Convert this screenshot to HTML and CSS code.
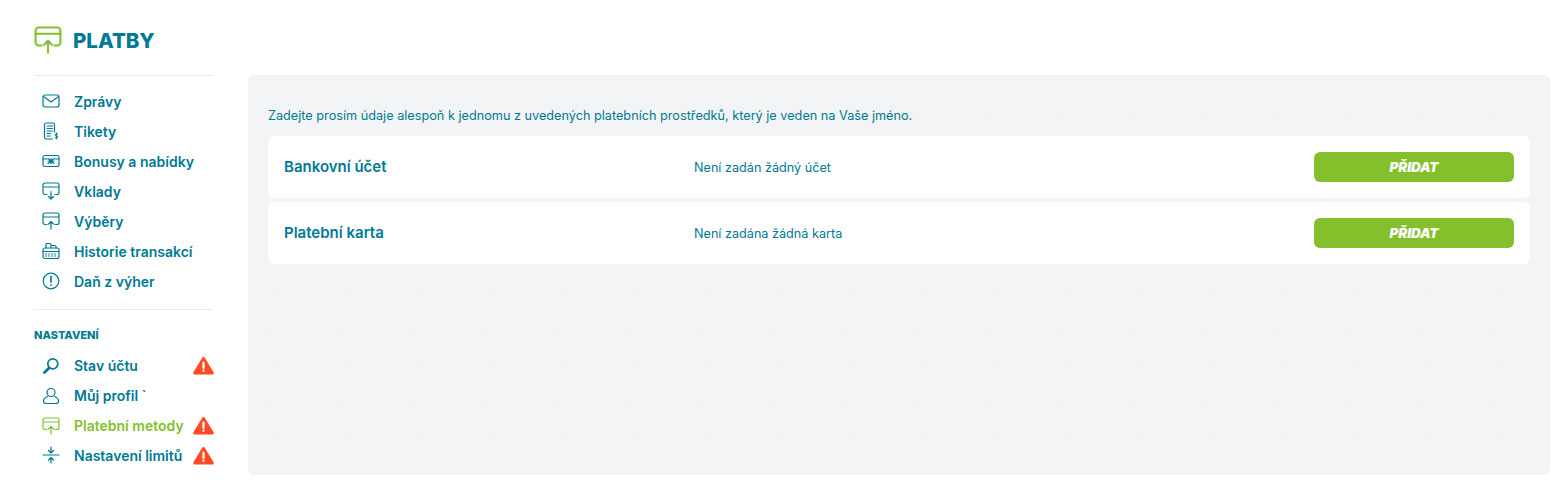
FILE: index.html
```html
<!DOCTYPE html>
<html lang="cs">
<head>
  <meta charset="UTF-8" />
  <title>Platby</title>
  <link rel="stylesheet" href="styles.css">
</head>
<body>
<svg class="sprites" width="0" height="0">
  <symbol id="i-up" viewBox="0 0 18 18">
    <path d="M5 12.500H3a2 2 0 0 1-2-2V3a2 2 0 0 1 2-2h12a2 2 0 0 1 2 2v7.500a2 2 0 0 1-2 2h-2M1 5h16M9 17v-7.500M6.500 12 9 9.500l2.500 2.500"/>
  </symbol>
  <symbol id="i-down" viewBox="0 0 18 18">
    <path d="M5 12.500H3a2 2 0 0 1-2-2V3a2 2 0 0 1 2-2h12a2 2 0 0 1 2 2v7.500a2 2 0 0 1-2 2h-2M1 5h16M9 9.500V17M6.500 14.500 9 17l2.500-2.500"/>
  </symbol>
  <symbol id="i-warn" viewBox="0 0 21 19">
    <path class="warn-body" d="M10.500 2.500 19.300 17H1.700Z"/>
    <path class="warn-mark" d="M10.500 6.500v5.500M10.500 14.500v.5"/>
  </symbol>
</svg>

<aside class="sidebar">
  <h1 class="title">
    <svg class="title-icon"><use href="#i-up"/></svg>
    PLATBY
  </h1>
  <ul class="menu">
    <li><svg class="icon" viewBox="0 0 18 18"><rect x="1" y="3" width="16" height="12" rx="2"/><path d="M1.500 4.500 9 10l7.500-5.500"/></svg>Zprávy</li>
    <li><svg class="icon" viewBox="0 0 18 18"><path d="M10.500 17H4a1.500 1.500 0 0 1-1.500-1.500v-13A1.500 1.500 0 0 1 4 1h7a1.500 1.500 0 0 1 1.500 1.500V10"/><path class="fine" d="M5 4h5.500M5 6.500h5.500M5 9h5.500M5 11.500h3.500M5 14h3.500"/><path class="fine" d="M15.500 12h-1.500a.9.9 0 0 0 0 1.900h.8a.9.9 0 0 1 0 1.900h-1.600M14.400 11v6"/></svg>Tikety</li>
    <li><svg class="icon" viewBox="0 0 18 18"><rect x="1" y="3.500" width="16" height="11" rx="2"/><path d="M1 7h4M13 7h4M6 6.500l6 5M12 6.500l-6 5M9 6.500v5M6 9h6"/></svg>Bonusy a nabídky</li>
    <li><svg class="icon"><use href="#i-down"/></svg>Vklady</li>
    <li><svg class="icon"><use href="#i-up"/></svg>Výběry</li>
    <li><svg class="icon" viewBox="0 0 18 18"><rect x="1" y="6" width="16" height="10.500" rx="2"/><path d="M4 6V2.500a1 1 0 0 1 1-1h3a1 1 0 0 1 1 1V6M9 3.500h4a1 1 0 0 1 1 1V6M1 9.500h16"/><path class="fine" d="M3.500 12h1M6.500 12h1M9.500 12h1M12.500 12h1M3.500 14h1M6.500 14h1M9.500 14h1M12.500 14h1"/></svg>Historie transakcí</li>
    <li><svg class="icon" viewBox="0 0 18 18"><circle cx="9" cy="9" r="7.800"/><path class="bold" d="M9 4.500v5.500M9 13v.2"/></svg>Daň z výher</li>
  </ul>
  <h2 class="menu-heading">NASTAVENÍ</h2>
  <ul class="menu menu-settings">
    <li><svg class="icon" viewBox="0 0 18 18"><circle class="bold" cx="10.800" cy="6.800" r="5"/><path class="thick" d="M7 11 2.500 15.500"/></svg>Stav účtu<svg class="warn"><use href="#i-warn"/></svg></li>
    <li><svg class="icon" viewBox="0 0 18 18"><circle cx="9" cy="5.500" r="4"/><path d="M5.500 9.500C3 10.500 1.500 12 1.500 14a2.500 2.500 0 0 0 2.500 2.500h10a2.500 2.500 0 0 0 2.500-2.500c0-2-1.500-3.500-4-4.500"/></svg>Můj profil `</li>
    <li class="active"><svg class="icon"><use href="#i-up"/></svg>Platební metody<svg class="warn"><use href="#i-warn"/></svg></li>
    <li><svg class="icon" viewBox="0 0 18 18"><path d="M1 9h16M9 1v5.500M6.500 4.500 9 7l2.500-2.500M9 17v-5.500M6.500 14 9 11.500l2.500 2.500"/></svg>Nastavení limitů<svg class="warn"><use href="#i-warn"/></svg></li>
  </ul>
</aside>

<main class="panel">
  <p class="intro">Zadejte prosím údaje alespoň k jednomu z uvedených platebních prostředků, který je veden na Vaše jméno.</p>
  <div class="method">
    <div class="method-name">Bankovní účet</div>
    <div class="method-value">Není zadán žádný účet</div>
    <button class="add-btn">PŘIDAT</button>
  </div>
  <div class="method">
    <div class="method-name">Platební karta</div>
    <div class="method-value">Není zadána žádná karta</div>
    <button class="add-btn">PŘIDAT</button>
  </div>
</main>
</body>
</html>
```

FILE: styles.css
```css
* {
  box-sizing: border-box;
}
body {
  font-family: Inter, "Noto Sans", sans-serif;
  color: #007a94;
  background: #fff;
  margin: 0;
  height: 490px;
  padding: 15px 13px 15px 34px;
  display: flex;
  gap: 35px;
  overflow: hidden;
}
.sprites {
  display: none;
}
svg {
  fill: none;
  stroke: currentColor;
  stroke-width: 1.2;
  stroke-linecap: round;
  stroke-linejoin: round;
}
.sidebar {
  width: 179px;
  flex-shrink: 0;
}
.title {
  display: flex;
  align-items: center;
  gap: 11px;
  height: 61px;
  margin: 0;
  padding-bottom: 10px;
  font-size: 20.5px;
  font-weight: 800;
  border-bottom: 1px solid #e8eaeb;
}
.title-icon {
  width: 28px;
  height: 28px;
  color: #84bf2c;
  stroke-width: 1.350;
}
.menu {
  list-style: none;
  margin: 0;
  padding: 10px 0 13px;
  border-bottom: 1px solid #e8eaeb;
}
.menu li {
  display: flex;
  align-items: center;
  height: 30px;
  padding-left: 8px;
  font-size: 14px;
  font-weight: 600;
}
.menu .active {
  color: #84bf2c;
}
.icon {
  width: 18px;
  height: 18px;
  margin-right: 14px;
  flex-shrink: 0;
}
.fine {
  stroke-width: 1;
}
.bold {
  stroke-width: 1.700;
}
.thick {
  stroke-width: 2.800;
}
.warn {
  width: 21px;
  height: 19px;
  margin-left: auto;
  margin-right: -1px;
  flex-shrink: 0;
}
.warn-body {
  fill: #ff4b24;
  stroke: #ff4b24;
  stroke-width: 3;
}
.warn-mark {
  stroke: #fff;
  stroke-width: 2.200;
}
.menu-heading {
  margin: 18px 0 8px;
  font-size: 11px;
  font-weight: 800;
  line-height: 15px;
}
.menu-settings {
  padding: 0;
  border-bottom: 0;
}
.menu-settings li {
  height: 29.830px;
}
.panel {
  flex: 1;
  margin-top: 60px;
  padding: 32px 20px 0;
  height: 400px;
  border-radius: 6px;
  background-color: #f3f4f5;
  background-image: radial-gradient(#eff0f1 1px, transparent 1px);
  background-size: 9px 9px;
}
.intro {
  margin: 0 0 12px;
  font-size: 12.700px;
  line-height: 17px;
}
.method {
  display: flex;
  align-items: center;
  height: 62px;
  margin-bottom: 4px;
  padding: 0 16px;
  background: #fff;
  border-radius: 6px;
}
.method-name {
  width: 410px;
  padding-bottom: 2px;
  font-size: 15px;
  font-weight: 600;
}
.method-value {
  flex: 1;
  font-size: 12.650px;
}
.add-btn {
  width: 200px;
  height: 30px;
  border: 0;
  border-radius: 6px;
  background: #84bf2c;
  color: #fff;
  font-family: Inter, sans-serif;
  font-size: 13.300px;
  font-weight: 900;
  font-style: italic;
}
```
